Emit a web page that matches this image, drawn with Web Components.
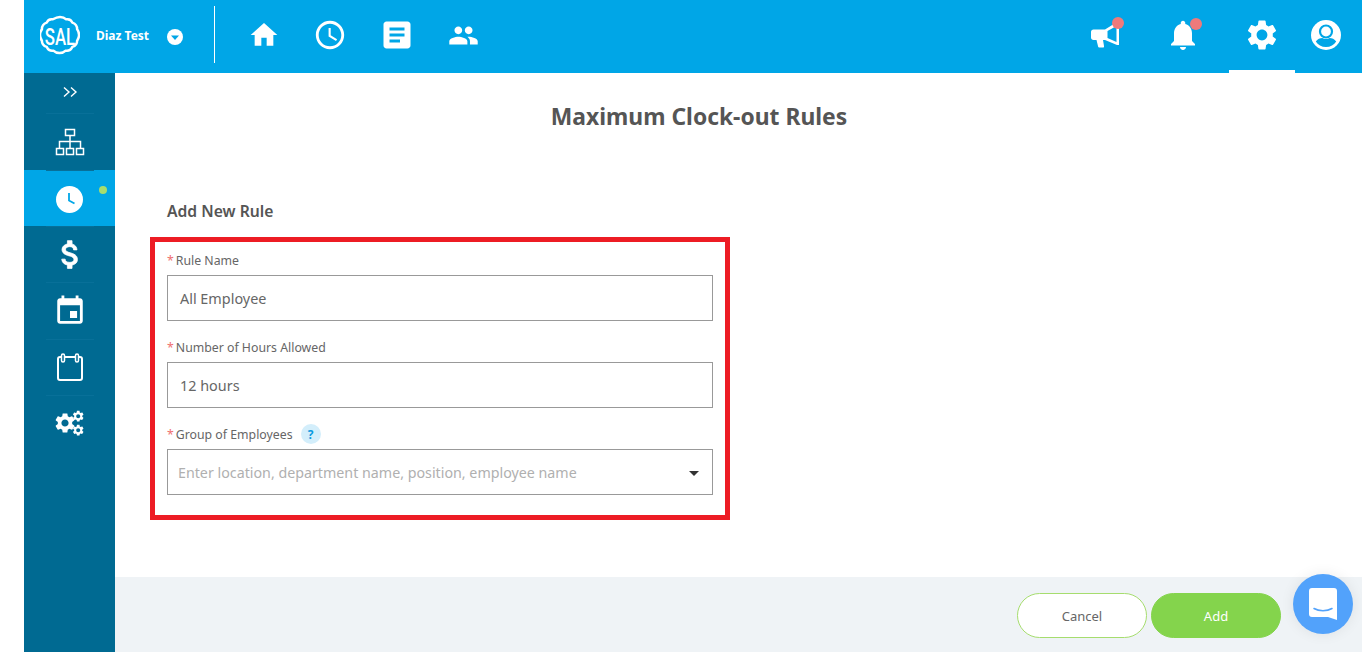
<!DOCTYPE html>
<html lang="en">
<head>
<meta charset="utf-8">
<title>Maximum Clock-out Rules</title>
<style>
  html, body { margin: 0; height: 100%; background: #fff; }
  body { font-family: "Noto Sans", "Open Sans", sans-serif; overflow: hidden; }
  sal-app { height: 652px; }
</style>
</head>
<body>
<sal-app>
  <sal-topbar slot="top"></sal-topbar>
  <sal-sidebar slot="side"></sal-sidebar>
  <sal-rule-form></sal-rule-form>
  <sal-chat-bubble slot="over"></sal-chat-bubble>
</sal-app>

<script>
const ICONS = {
    home: 'M10 20v-6h4v6h5v-8h3L12 3 2 12h3v8z',
    clock: 'M11.99 2C6.47 2 2 6.48 2 12s4.47 10 9.99 10C17.52 22 22 17.52 22 12S17.52 2 11.99 2zM12 20c-4.42 0-8-3.58-8-8s3.58-8 8-8 8 3.58 8 8-3.58 8-8 8zm.5-13H11v6l5.25 3.15.75-1.23-4.5-2.67z',
    article: 'M19 3H5c-1.1 0-2 .9-2 2v14c0 1.1.9 2 2 2h14c1.1 0 2-.9 2-2V5c0-1.1-.9-2-2-2zm-5 14H7v-2h7v2zm3-4H7v-2h10v2zm0-4H7V7h10v2z',
    people: 'M16 11c1.66 0 2.99-1.34 2.99-3S17.66 5 16 5c-1.66 0-3 1.34-3 3s1.34 3 3 3zm-8 0c1.66 0 2.99-1.34 2.99-3S9.66 5 8 5C6.34 5 5 6.34 5 8s1.34 3 3 3zm0 2c-2.33 0-7 1.17-7 3.5V19h14v-2.5c0-2.33-4.67-3.5-7-3.5zm8 0c-.29 0-.62.02-.97.05 1.16.84 1.97 1.97 1.97 3.45V19h6v-2.5c0-2.33-4.67-3.5-7-3.5z',
    bell: 'M12 22c1.1 0 2-.9 2-2h-4c0 1.1.9 2 2 2zm6-6v-5c0-3.07-1.63-5.64-4.5-6.32V4c0-.83-.67-1.5-1.5-1.5s-1.5.67-1.5 1.5v.68C7.64 5.36 6 7.92 6 11v5l-2 2v1h16v-1l-2-2z',
    gear: 'M19.14 12.94c.04-.3.06-.61.06-.94 0-.32-.02-.64-.07-.94l2.03-1.58c.18-.14.23-.41.12-.61l-1.92-3.32c-.12-.22-.37-.29-.59-.22l-2.39.96c-.5-.38-1.03-.7-1.62-.94l-.36-2.54c-.04-.24-.24-.41-.48-.41h-3.84c-.24 0-.43.17-.47.41l-.36 2.54c-.59.24-1.13.57-1.62.94l-2.39-.96c-.22-.08-.47 0-.59.22L2.74 8.87c-.12.21-.08.47.12.61l2.03 1.58c-.05.3-.09.63-.09.94s.02.64.07.94l-2.03 1.58c-.18.14-.23.41-.12.61l1.92 3.32c.12.22.37.29.59.22l2.39-.96c.5.38 1.03.7 1.62.94l.36 2.54c.05.24.24.41.48.41h3.84c.24 0 .44-.17.47-.41l.36-2.54c.59-.24 1.13-.56 1.62-.94l2.39.96c.22.08.47 0 .59-.22l1.92-3.32c.12-.22.07-.47-.12-.61l-2.01-1.58zM12 15.6c-1.98 0-3.6-1.62-3.6-3.6s1.62-3.6 3.6-3.6 3.6 1.62 3.6 3.6-1.62 3.6-3.6 3.6z',
    money: 'M11.8 10.9c-2.27-.59-3-1.2-3-2.15 0-1.09 1.01-1.85 2.7-1.85 1.78 0 2.44.85 2.5 2.1h2.21c-.07-1.72-1.12-3.3-3.21-3.81V3h-3v2.16c-1.94.42-3.5 1.68-3.5 3.61 0 2.31 1.91 3.46 4.7 4.13 2.5.6 3 1.48 3 2.41 0 .69-.49 1.79-2.7 1.79-2.06 0-2.87-.92-2.98-2.1h-2.2c.12 2.19 1.76 3.42 3.68 3.83V21h3v-2.15c1.95-.37 3.5-1.5 3.5-3.55 0-2.84-2.43-3.81-4.7-4.4z',
    event: 'M17 12h-5v5h5v-5zM16 1v2H8V1H6v2H5c-1.11 0-1.99.9-1.99 2L3 19c0 1.1.89 2 2 2h14c1.1 0 2-.9 2-2V5c0-1.1-.9-2-2-2h-1V1h-2zm3 18H5V8h14v11z'
};

function icon(name, size) {
    return `<svg width="${size}" height="${size}" viewBox="0 0 24 24" fill="#fff"><path d="${ICONS[name]}"/></svg>`;
}

class SalApp extends HTMLElement {
    constructor() {
        super();
        this.attachShadow({ mode: 'open' });
        this.shadowRoot.innerHTML = `
      <style>
        :host { display: block; position: relative; padding-left: 24px; box-sizing: border-box; }
        .frame { display: flex; flex-direction: column; height: 100%; }
        .below { display: flex; flex: 1; min-height: 0; }
        main { flex: 1; min-width: 0; display: flex; }
      </style>
      <div class="frame">
        <slot name="top"></slot>
        <div class="below">
          <slot name="side"></slot>
          <main><slot></slot></main>
        </div>
      </div>
      <slot name="over"></slot>
    `;
    }
}

class SalTopbar extends HTMLElement {
    constructor() {
        super();
        this.attachShadow({ mode: 'open' });
        this.shadowRoot.innerHTML = `
      <style>
        :host { display: flex; align-items: center; height: 73px; background: #00a6e7; color: #fff; flex: none; }
        .logo { margin: 0 0 3px 16px; width: 40px; height: 40px; position: relative; display: block; }
        .logo svg { display: block; }
        .logo span { position: absolute; left: 0; right: 0; top: 2px; height: 40px; display: flex; align-items: center; justify-content: center; font: 500 24px/40px "Roboto", sans-serif; transform: scaleX(.7); }
        .name { margin: 0 0 2px 16px; font-size: 12px; font-weight: 700; width: 71px; white-space: nowrap; }
        .caret { width: 16px; height: 16px; display: block; }
        .sep { width: 1px; height: 57px; background: #fff; margin: 0 0 4px 31px; }
        nav { display: flex; align-items: center; margin: 0 0 3px 15.5px; }
        nav a { width: 66.5px; display: flex; justify-content: center; }
        .right { margin-left: auto; display: flex; align-items: center; height: 100%; }
        .slot { position: relative; display: flex; justify-content: center; align-items: center; height: 100%; width: 78px; box-sizing: border-box; padding: 0 14px 4px 0; }
        .dot { position: absolute; left: 39px; width: 12px; height: 12px; border-radius: 50%; background: #ee7a7b; }
        .active { width: 66px; padding: 0 0 1px; border-bottom: 3px solid #fff; }
        .me { width: 67px; padding: 0 5px 3px 0; }
      </style>
      <span class="logo">
        <svg width="40" height="40" viewBox="0 0 42 42" fill="none" stroke="#fff" stroke-width="2.600">
          <path d="M21 2c3 0 5 1 6.500 2.500 3-.5 5.500 1 6.500 3.500 3 1 5 4 5 7 1.500 2 2 4 2 6s-1 4.500-2 6c0 3-2 5.500-5 6.500-1.500 3-4 4.500-7 4-1.500 1.500-4 2.500-6.500 2.500s-5-1-6.500-2.500c-3 .5-5.500-1-7-4-3-1-5-3.500-5-6.500-1-1.500-2-3.500-2-6s1-4.500 2-6c0-3 2-6 5-7 1-2.500 3.500-4 6.500-3.500C16 3 18 2 21 2z"/>
        </svg>
        <span>SAL</span>
      </span>
      <span class="name">Diaz Test</span>
      <svg class="caret" viewBox="0 0 16 16"><circle cx="8" cy="8" r="8" fill="#fff"/><path d="M4 6.500h8L8 11z" fill="#00a6e7"/></svg>
      <span class="sep"></span>
      <nav>
        <a>${icon('home', 32)}</a>
        <a>${icon('clock', 34)}</a>
        <a>${icon('article', 36)}</a>
        <a>${icon('people', 31)}</a>
      </nav>
      <div class="right">
        <span class="slot">
          <svg width="30" height="30" viewBox="0 0 30 30" fill="#fff" fill-rule="evenodd"><path d="M1 12c0-1.500 1-2.500 2.500-2.500H15L27 2h2v23h-2L15 20h-2l1 6c.2 1-.3 1.500-1 1.500H9.500c-.8 0-1.200-.4-1.400-1L6.500 20h-3C2 20 1 19 1 17.500zM17.500 11v7l9 4V6z"/></svg>
          <i class="dot" style="top:17px"></i>
        </span>
        <span class="slot">${icon('bell', 36)}<i class="dot" style="top:18px"></i></span>
        <span class="slot active">${icon('gear', 36)}</span>
        <span class="slot me">
          <svg width="30" height="30" viewBox="0 0 30 30"><circle cx="15" cy="15" r="15" fill="#fff"/><circle cx="15" cy="11.500" r="6" fill="none" stroke="#00a6e7" stroke-width="2.200"/><path d="M4.800 21.500c1.500-2.500 4.500-3.500 6.500-3.500 2.200 1.200 5.200 1.200 7.400 0 2 0 5 1 6.500 3.500-2 3.500-5.800 5.500-10.200 5.500s-8.200-2-10.200-5.500z" fill="#00a6e7"/></svg>
        </span>
      </div>
    `;
    }
}

class SalSidebar extends HTMLElement {
    constructor() {
        super();
        this.attachShadow({ mode: 'open' });
        this.shadowRoot.innerHTML = `
      <style>
        :host { display: flex; flex-direction: column; width: 91px; flex: none; background: #006a92; }
        .toggle { height: 40px; padding-bottom: 2px; box-sizing: border-box; display: flex; align-items: center; justify-content: center; }
        .item { height: 56.2px; box-sizing: border-box; position: relative; display: flex; align-items: center; justify-content: center; }
        .item::before { content: ""; position: absolute; top: 0; left: 22px; right: 21px; height: 1px; background: #087099; }
        .first { height: 57px; }
        .low { padding-top: 2px; }
        .on { background: #00a6e7; }
        .pip { position: absolute; left: 75px; top: 16px; width: 8px; height: 8px; border-radius: 50%; background: #a6dd6e; }
      </style>
      <div class="toggle">
        <svg width="16" height="12" viewBox="0 0 16 12" fill="none" stroke="#fff" stroke-width="1.400"><path d="M2 1.500l5 4.500-5 4.500M9 1.500l5 4.500-5 4.500"/></svg>
      </div>
      <div class="item first">
        <svg width="30" height="28" viewBox="0 0 30 28" fill="none" stroke="#fff" stroke-width="1.500"><rect x="10.500" y="1.500" width="9" height="6"/><path d="M15 7.500v13M4.500 20.500V13.500h21v7"/><rect x="1.500" y="20.500" width="7" height="6"/><rect x="11.500" y="20.500" width="7" height="6"/><rect x="21.500" y="20.500" width="7" height="6"/></svg>
      </div>
      <div class="item on low">
        <svg width="27" height="27" viewBox="0 0 27 27"><circle cx="13.500" cy="13.500" r="13.500" fill="#fff"/><path d="M13 7v7.500l5.500 3" fill="none" stroke="#00a6e7" stroke-width="1.800"/></svg>
        <i class="pip"></i>
      </div>
      <div class="item"><svg width="37" height="37" viewBox="0 0 24 24" fill="#fff" stroke="#fff" stroke-width=".5" style="margin-left:2px"><path d="${ICONS.money}"/></svg></div>
      <div class="item low">${icon('event', 34)}</div>
      <div class="item">
        <svg width="28" height="30" viewBox="0 0 28 30" fill="none" stroke="#fff" stroke-width="2"><rect x="2" y="5" width="24" height="23" rx="2"/><path d="M7 3.500v5M21 3.500v5" stroke-width="4.500" stroke-linecap="round"/><path d="M7 3.500v5M21 3.500v5" stroke="#006a92" stroke-width="1.500" stroke-linecap="round"/></svg>
      </div>
      <div class="item">
        <svg width="30" height="28" viewBox="0 0 30 28" fill="#fff">
          <g transform="translate(-2 2)"><path d="${ICONS.gear}"/></g>
          <g transform="translate(16.500 .5) scale(.56)"><path d="${ICONS.gear}"/></g>
          <g transform="translate(16.500 14.500) scale(.56)"><path d="${ICONS.gear}"/></g>
        </svg>
      </div>
    `;
    }
}

class SalField extends HTMLElement {
    constructor() {
        super();
        this.attachShadow({ mode: 'open' });
        const tip = this.hasAttribute('help') ? '<span class="help">?</span>' : '';
        const caret = this.hasAttribute('select') ? '<svg class="drop" width="10" height="5" viewBox="0 0 10 5"><path d="M0 0h10L5 5z" fill="#333"/></svg>' : '';
        const ph = this.hasAttribute('placeholder');
        this.shadowRoot.innerHTML = `
      <style>
        :host { display: block; }
        label { display: flex; align-items: center; height: 24px; margin-bottom: 3px; font-size: 12.3px; color: #666; }
        label b { color: #ef6f6f; font-weight: 400; margin-right: 2px; }
        .help { width: 20px; height: 20px; margin-left: 8px; border-radius: 50%; background: #d3eefb; color: #0a9ae0; font-size: 12px; font-weight: 700; display: flex; align-items: center; justify-content: center; }
        .box { height: 46px; box-sizing: border-box; border: 1px solid #999; display: flex; align-items: center; justify-content: space-between; padding: 0 13px 0 ${ph ? 10 : 12}px; font-size: ${ph ? 14.25 : 14.4}px; color: ${ph ? '#b0b0b0' : '#666'}; white-space: nowrap; }
        .drop { margin-top: 3px; }
      </style>
      <label><b>*</b><span>${this.getAttribute('label')}</span>${tip}</label>
      <div class="box"><span><slot></slot></span>${caret}</div>
    `;
    }
}

class SalButton extends HTMLElement {
    constructor() {
        super();
        this.attachShadow({ mode: 'open' });
        this.shadowRoot.innerHTML = `
      <style>
        :host { display: flex; width: 130px; height: 45px; box-sizing: border-box; border-radius: 23px; padding-top: 1px; align-items: center; justify-content: center; font-size: 13px; background: #fff; border: 1px solid #a6dd6e; color: #666; }
        :host([primary]) { background: #84d44c; border-color: #84d44c; color: #fff; }
      </style>
      <slot></slot>
    `;
    }
}

class SalRuleForm extends HTMLElement {
    constructor() {
        super();
        this.attachShadow({ mode: 'open' });
        this.shadowRoot.innerHTML = `
      <style>
        :host { display: flex; flex-direction: column; flex: 1; min-width: 0; color: #555; }
        .body { flex: 1; padding-left: 35px; }
        h1 { margin: 27px 0 0 -35px; width: 1168px; text-align: center; font-size: 22.85px; line-height: 33px; font-weight: 700; color: #555; }
        h2 { margin: 66px 0 0 17px; font-size: 15.7px; line-height: 24px; font-weight: 600; color: #555; }
        .red { margin-top: 14px; width: 580px; height: 283px; box-sizing: border-box; border: 5px solid #ed1c24; padding: 6px 12px 0; display: flex; flex-direction: column; gap: 14px; }
        footer { height: 75px; background: #eff3f6; display: flex; justify-content: flex-end; align-items: flex-start; gap: 4px; padding: 16px 81px 0 0; box-sizing: border-box; }
      </style>
      <div class="body">
        <h1>Maximum Clock-out Rules</h1>
        <h2>Add New Rule</h2>
        <div class="red">
          <sal-field label="Rule Name">All Employee</sal-field>
          <sal-field label="Number of Hours Allowed">12 hours</sal-field>
          <sal-field label="Group of Employees" help select placeholder>Enter location, department name, position, employee name</sal-field>
        </div>
      </div>
      <footer>
        <sal-button>Cancel</sal-button>
        <sal-button primary>Add</sal-button>
      </footer>
    `;
    }
}

class SalChatBubble extends HTMLElement {
    constructor() {
        super();
        this.attachShadow({ mode: 'open' });
        this.shadowRoot.innerHTML = `
      <style>
        :host { position: absolute; left: 1293px; top: 574px; width: 60px; height: 60px; border-radius: 50%; background: #52a2fb; box-shadow: 0 0 14px rgba(0,0,0,.08); display: flex; align-items: center; justify-content: center; }
      </style>
      <svg width="28" height="32" viewBox="0 0 28 32"><path d="M3 0h22a3 3 0 0 1 3 3v29l-9-3H3a3 3 0 0 1-3-3V3a3 3 0 0 1 3-3z" fill="#fff"/><path d="M5 20.500c5 3 13 3 18 0" fill="none" stroke="#52a2fb" stroke-width="1.500" stroke-linecap="round"/></svg>
    `;
    }
}

customElements.define('sal-field', SalField);
customElements.define('sal-button', SalButton);
customElements.define('sal-topbar', SalTopbar);
customElements.define('sal-sidebar', SalSidebar);
customElements.define('sal-rule-form', SalRuleForm);
customElements.define('sal-chat-bubble', SalChatBubble);
customElements.define('sal-app', SalApp);
</script>
</body>
</html>
